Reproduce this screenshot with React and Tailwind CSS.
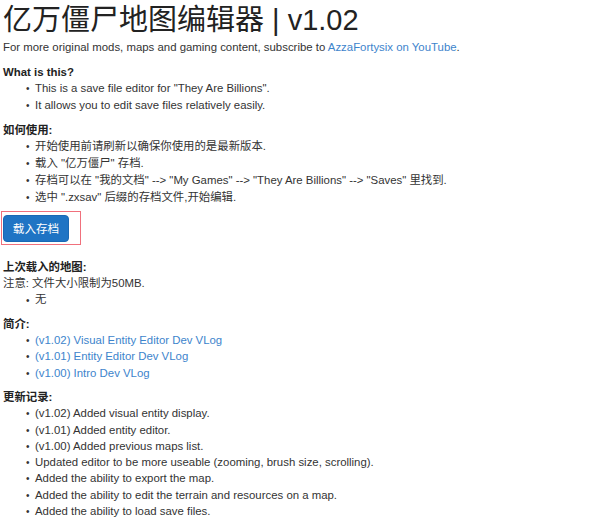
import React from 'react';

const howTo = [
    '开始使用前请刷新以确保你使用的是最新版本.',
    '载入 "亿万僵尸" 存档.',
    '存档可以在 "我的文档" --> "My Games" --> "They Are Billions" --> "Saves" 里找到.',
    '选中 ".zxsav" 后缀的存档文件,开始编辑.',
];

const vlogs = [
    '(v1.02) Visual Entity Editor Dev VLog',
    '(v1.01) Entity Editor Dev VLog',
    '(v1.00) Intro Dev VLog',
];

const changes = [
    '(v1.02) Added visual entity display.',
    '(v1.01) Added entity editor.',
    '(v1.00) Added previous maps list.',
    'Updated editor to be more useable (zooming, brush size, scrolling).',
    'Added the ability to export the map.',
    'Added the ability to edit the terrain and resources on a map.',
    'Added the ability to load save files.',
];

const Item = ({ children, link }) => (
    <li className="flex h-[16.3px] items-center">
        <span className="w-[32px] shrink-0 pl-[23px] text-[10px]">•</span>
        <span className={link ? 'text-[#3d84cc]' : ''}>{children}</span>
    </li>
);

const Heading = ({ children, className = '' }) => (
    <h4 className={`h-[16.3px] font-bold text-[#222] flex items-center ${className}`}>{children}</h4>
);

export default function App() {
    return (
        <div
            className="w-[600px] h-[527px] overflow-hidden bg-white text-[11.4px] text-[#333] pl-[3px]"
            style={{ fontFamily: '"Liberation Sans", Arial, "Noto Sans CJK SC", sans-serif' }}
        >
            <h1 className="pt-[4px] h-[38px] text-[29px] leading-[32px] text-[#222]">
                亿万僵尸地图编辑器 | v1.02
            </h1>
            <p className="h-[19px] leading-[19px]">
                For more original mods, maps and gaming content, subscribe to{' '}
                <span className="text-[#3d84cc]">AzzaFortysix on YouTube</span>.
            </p>

            {/* What is this */}
            <Heading className="mt-[7.5px]">What is this?</Heading>
            <ul>
                <Item>This is a save file editor for "They Are Billions".</Item>
                <Item>It allows you to edit save files relatively easily.</Item>
            </ul>

            <Heading className="mt-[8.6px]">如何使用:</Heading>
            <ul className="[&>li]:h-[17px]">
                {howTo.map(t => <Item key={t}>{t}</Item>)}
            </ul>

            {/* load button with red highlight */}
            <div className="mt-[5px] ml-[-2px] w-[80px] h-[34px] border border-[#f0707c] pl-[1px] pt-[3px]">
                <button className="w-[66px] h-[27px] rounded-[4px] bg-[#1f74c4] border border-[#1a68b3] text-white text-[11.6px]">
                    载入存档
                </button>
            </div>

            <Heading className="mt-[14px]">上次载入的地图:</Heading>
            <p className="h-[16.3px] flex items-center">注意: 文件大小限制为50MB.</p>
            <ul>
                <Item>无</Item>
            </ul>

            <Heading className="mt-[8px]">简介:</Heading>
            <ul>
                {vlogs.map(t => <Item key={t} link>{t}</Item>)}
            </ul>

            <Heading className="mt-[8px]">更新记录:</Heading>
            <ul>
                {changes.map(t => <Item key={t}>{t}</Item>)}
            </ul>
        </div>
    );
}
